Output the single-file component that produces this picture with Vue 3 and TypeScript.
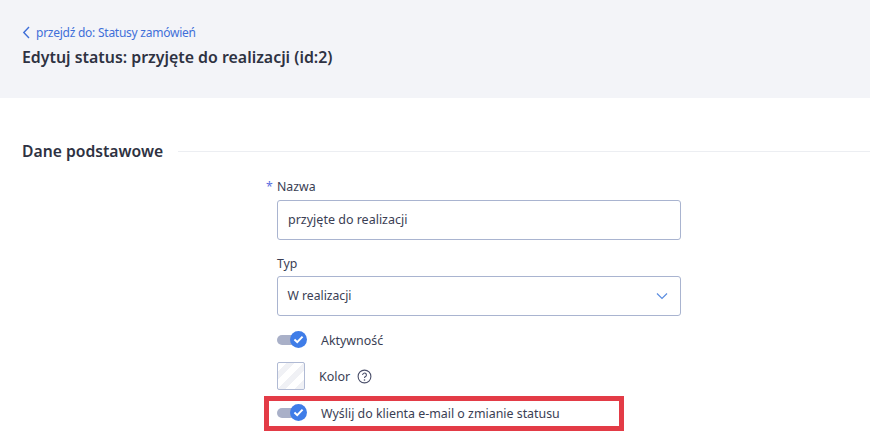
<script setup lang="ts">
const title: string = 'Edytuj status: przyjęte do realizacji (id:2)'
</script>

<template>
  <div class="page">
    <header class="head">
      <a class="back">
        <svg width="9" height="13" viewBox="0 0 9 13" fill="none"><path d="M7 1L1.8 6.5 7 12" stroke="#3f6fd8" stroke-width="1.4" /></svg>
        <span>przejdź do: Statusy zamówień</span>
      </a>
      <h1>{{ title }}</h1>
    </header>
    <section class="section">
      <div class="legend"><h2>Dane podstawowe</h2><span class="rule"></span></div>
      <div class="form">
        <label class="lab"><span class="star">*</span>Nazwa</label>
        <div class="field">przyjęte do realizacji</div>
        <label class="lab typ">Typ</label>
        <div class="field select">
          <span>W realizacji</span>
          <svg width="12" height="8" viewBox="0 0 12 8" fill="none"><path d="M1 1.5L6 6.5 11 1.5" stroke="#5b8de0" stroke-width="1.2" /></svg>
        </div>
        <div class="row active">
          <span class="toggle"><span class="knob"><svg width="11" height="9" viewBox="0 0 12 10" fill="none"><path d="M1.5 5L4.6 8 10.5 1.8" stroke="#fff" stroke-width="2.2" /></svg></span></span>
          <span class="toggle-text">Aktywność</span>
        </div>
        <div class="row color">
          <span class="swatch"></span>
          <span class="color-text">Kolor</span>
          <svg class="help" width="15" height="15" viewBox="0 0 15 15" fill="none"><circle cx="7.5" cy="7.5" r="6.4" stroke="#4a4f6a" stroke-width="1.1" /><path d="M5.6 6a1.9 1.9 0 1 1 2.9 1.6c-.7.4-1 .8-1 1.5" stroke="#4a4f6a" stroke-width="1.1" /><circle cx="7.5" cy="11" r=".8" fill="#4a4f6a" /></svg>
        </div>
        <div class="row mail">
          <span class="toggle"><span class="knob"><svg width="11" height="9" viewBox="0 0 12 10" fill="none"><path d="M1.5 5L4.6 8 10.5 1.8" stroke="#fff" stroke-width="2.2" /></svg></span></span>
          <span class="toggle-text">Wyślij do klienta e-mail o zmianie statusu</span>
        </div>
      </div>
    </section>
  </div>
</template>

<style>
html, body { margin: 0; background: #fff; overflow: hidden; }
</style>

<style scoped>
.page { width: 870px; height: 437px; overflow: hidden; font-family: "Noto Sans", "Open Sans", sans-serif; color: #3a3e54; background: #fff; }
.head { height: 98px; box-sizing: border-box; background: #f3f4f8; padding: 23px 22px 0; }
.back { display: flex; align-items: center; gap: 5px; height: 18px; font-size: 12px; color: #3f6fd8; letter-spacing: -0.25px; }
h1 { margin: 5px 0 0; font-size: 15.9px; line-height: 22px; font-weight: 600; color: #2e3242; }
.section { padding-top: 41px; }
.legend { display: flex; align-items: center; gap: 15px; padding-left: 22px; height: 24px; }
h2 { margin: 0; font-size: 15.7px; font-weight: 600; color: #2e3242; white-space: nowrap; }
.rule { flex: 1; height: 1px; background: #eceef2; }
.form { width: 404px; margin: 15px 0 0 277px; display: flex; flex-direction: column; }
.lab { position: relative; height: 18px; line-height: 18px; font-size: 12.3px; margin-bottom: 4px; }
.star { position: absolute; left: -11px; top: 0; color: #5b6fe0; }
.typ { margin-top: 15px; margin-bottom: 3px; }
.field { box-sizing: border-box; height: 40px; border: 1px solid #a9b4d0; border-radius: 3px; padding: 0 10px; font-size: 12.5px; line-height: 38px; display: flex; align-items: center; justify-content: space-between; }
.select span { margin-left: -0.5px; font-size: 12.2px; }
.select svg { margin-right: 2px; }
.row { display: flex; align-items: center; }
.active { margin: 11px 0 0; height: 26px; }
.toggle { position: relative; display: block; width: 29px; height: 10px; border-radius: 5px; background: #a9b0c8; flex: none; }
.knob { position: absolute; right: -1px; top: -4px; width: 17px; height: 17px; border-radius: 50%; background: #3f7de8; display: flex; align-items: center; justify-content: center; }
.toggle-text { margin-left: 15px; font-size: 12.4px; white-space: nowrap; }
.color { margin-top: 9px; height: 28px; }
.swatch { box-sizing: border-box; width: 28px; height: 28px; border: 1px solid #b0bad4; border-radius: 2px; background: repeating-linear-gradient(135deg, #fff 0 6px, #f0f1f5 6px 12px); flex: none; }
.color-text { margin-left: 14px; font-size: 12.5px; }
.help { margin-left: 7px; }
.mail { position: relative; margin-top: 10px; height: 26px; }
.mail::after { content: ""; position: absolute; left: -13px; top: -4px; width: 360px; height: 35px; box-sizing: border-box; border: 5px solid #e33b46; }
</style>
